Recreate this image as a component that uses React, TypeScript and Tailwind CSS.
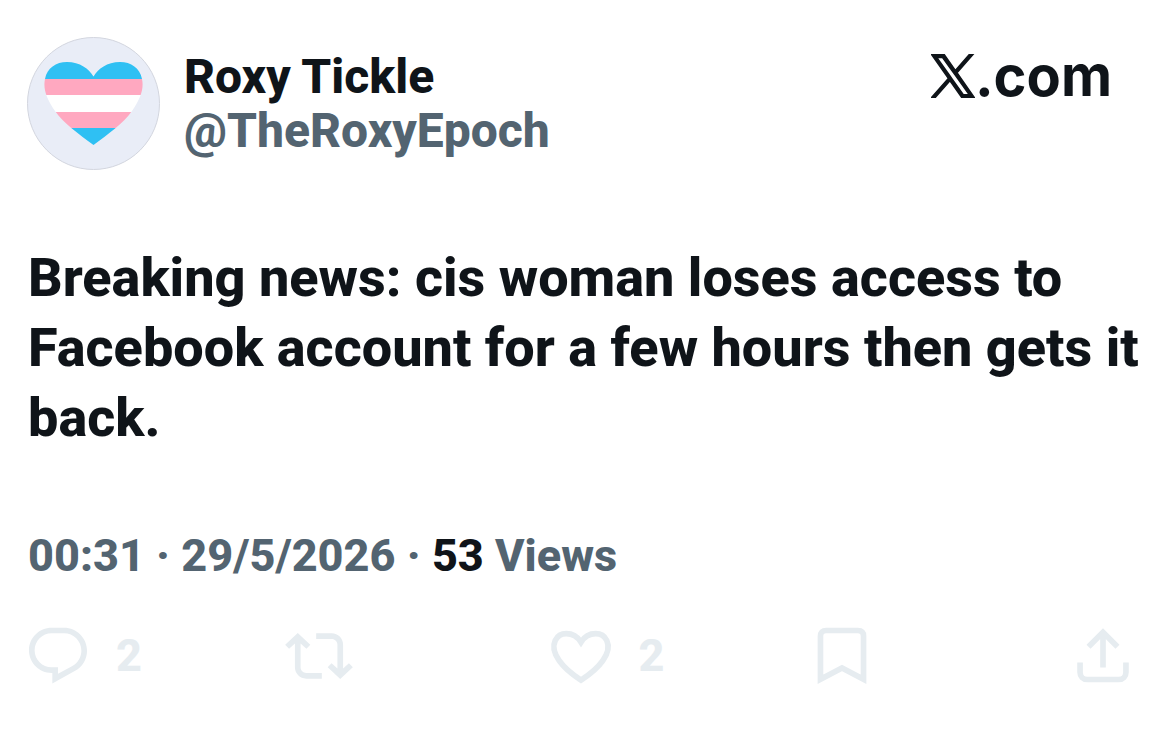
const post = {
  name: "Roxy Tickle",
  handle: "@TheRoxyEpoch",
  text: "Breaking news: cis woman loses access to Facebook account for a few hours then gets it back.",
  time: "00:31",
  date: "29/5/2026",
  views: 53,
  replies: 2,
  likes: 2,
};

const iconClass = "size-[68px] shrink-0";

function Avatar() {
  return (
    <svg viewBox="0 0 133 133" className="size-[133px] shrink-0" role="img" aria-label={post.name}>
      <defs>
        <clipPath id="heart">
          <path d="M66.500 108C52 97 37 87 28 74C19 61 16 51 18 42C20 31 29 25 40 25C53 25 62 32 66.500 39.500C71 32 80 25 93 25C104 25 113 31 115 42C117 51 114 61 105 74C96 87 81 97 66.500 108Z" />
        </clipPath>
      </defs>
      <circle cx="66.500" cy="66.500" r="66" fill="#e9edf7" stroke="#d3d6df" />
      <g clipPath="url(#heart)">
        <rect x="10" y="20" width="113" height="22" fill="#2fc0f3" />
        <rect x="10" y="42" width="113" height="16" fill="#ffa8c0" />
        <rect x="10" y="58" width="113" height="17" fill="#fff" />
        <rect x="10" y="75" width="113" height="16" fill="#ffa8c0" />
        <rect x="10" y="91" width="113" height="20" fill="#2fc0f3" />
      </g>
    </svg>
  );
}

function XLogo() {
  return (
    <svg viewBox="-0.4 -0.4 24.8 24.8" className="size-11" fill="currentColor" stroke="currentColor" strokeWidth="0.8" aria-hidden="true">
      <path d="M14.258 10.152L23.176 0h-2.113l-7.747 8.813L7.133 0H0l9.352 13.328L0 23.973h2.113l8.176-9.309 6.531 9.309h7.133zm-2.895 3.293l-.949-1.328L2.875 1.56h3.246l6.086 8.523.945 1.328 7.91 11.078h-3.246zm0 0" />
    </svg>
  );
}

function ReplyIcon() {
  return (
    <svg viewBox="0 0 24 24" className={iconClass} fill="currentColor" aria-hidden="true">
      <path d="M1.751 10c0-4.42 3.584-8 8.005-8h4.366c4.49 0 8.129 3.640 8.129 8.130 0 2.960-1.607 5.680-4.196 7.110l-8.054 4.460v-3.690h-.067c-4.490.1-8.183-3.510-8.183-8.010zm8.005-6c-3.317 0-6.005 2.690-6.005 6 0 3.370 2.770 6.080 6.138 6.010l.351-.01h1.761v2.300l5.087-2.810c1.951-1.080 3.163-3.130 3.163-5.360 0-3.390-2.744-6.130-6.129-6.130H9.756z" />
    </svg>
  );
}

function RepostIcon() {
  return (
    <svg viewBox="0 0 24 24" className={iconClass} fill="currentColor" aria-hidden="true">
      <path d="M4.500 3.880l4.432 4.140-1.364 1.460L5.500 7.550V16c0 1.100.896 2 2 2H13v2H7.500c-2.209 0-4-1.790-4-4V7.550L1.432 9.480.068 8.020 4.500 3.880zM16.500 6H11V4h5.500c2.209 0 4 1.790 4 4v8.450l2.068-1.930 1.364 1.460-4.432 4.140-4.432-4.140 1.364-1.460 2.068 1.930V8c0-1.100-.896-2-2-2z" />
    </svg>
  );
}

function LikeIcon() {
  return (
    <svg viewBox="0 0 24 24" className={iconClass} fill="none" stroke="currentColor" strokeWidth="2" aria-hidden="true">
      <path d="M12 20.500C8.500 18.200 5.900 15.900 4.300 13.600C2.400 10.900 2 8.400 2.900 6.500C3.700 4.900 5.200 4.100 6.800 4.100C9 4.100 10.800 5.200 12 7.100C13.200 5.200 15 4.100 17.200 4.100C18.800 4.100 20.300 4.900 21.100 6.500C22 8.400 21.600 10.900 19.700 13.600C18.100 15.900 15.500 18.200 12 20.500Z" />
    </svg>
  );
}

function BookmarkIcon() {
  return (
    <svg viewBox="0 0 24 24" className={iconClass} fill="none" stroke="currentColor" strokeWidth="2" aria-hidden="true">
      <path d="M4.400 20.200V5C4.400 3.700 5.100 3 6.400 3H17.600C18.900 3 19.600 3.700 19.600 5V20.200L12 16.200Z" />
    </svg>
  );
}

function ShareIcon() {
  return (
    <svg viewBox="0 0 24 24" className={iconClass} fill="none" stroke="currentColor" strokeWidth="2" aria-hidden="true">
      <path d="M12 16.100V3.800M6.900 8.700L12 3.600L17.100 8.700" />
      <path d="M3.900 14.300V17.700C3.900 19.300 4.900 20.300 6.500 20.300H17.500C19.100 20.300 20.100 19.300 20.100 17.700V14.300" />
    </svg>
  );
}

export default function App() {
  return (
    <main className="min-h-screen bg-white font-['Roboto',sans-serif] font-extrabold text-[#0f1419]">
      <article>
        <header className="flex items-start justify-between pt-[37px] pr-[58px] pl-[27px]">
          <div className="flex gap-6">
            <Avatar />
            <div className="pt-[13px] text-[48px] leading-[54px]">
              <h1>{post.name}</h1>
              <a href="#profile" className="text-[#536471]">
                {post.handle}
              </a>
            </div>
          </div>
          <a href="#home" aria-label="X.com" className="flex items-center pt-1 font-['Inter',sans-serif] text-[56px] leading-[70px] font-bold">
            <XLogo />
            <span>.com</span>
          </a>
        </header>

        <p className="pr-6 pl-7 pt-[73px] text-[54px] leading-[70px]">{post.text}</p>

        <div className="pr-6 pl-7 pt-[76px] text-[45px] leading-[54px] text-[#536471]">
          <time>
            {post.time} · {post.date}
          </time>{" "}
          · <span className="text-[#0f1419]">{post.views}</span> Views
        </div>

        <footer className="grid grid-cols-[1fr_1fr_1fr_1fr_auto] pt-[39px] pr-[33px] pl-6 text-[45px] leading-[68px] text-[#e6ecf0]">
          <button aria-label="Reply" className="flex items-center gap-6">
            <ReplyIcon />
            <span>{post.replies}</span>
          </button>
          <button aria-label="Repost" className="flex items-center">
            <RepostIcon />
          </button>
          <button aria-label="Like" className="flex items-center gap-6">
            <LikeIcon />
            <span>{post.likes}</span>
          </button>
          <button aria-label="Bookmark" className="flex items-center">
            <BookmarkIcon />
          </button>
          <button aria-label="Share" className="flex items-center">
            <ShareIcon />
          </button>
        </footer>
      </article>
    </main>
  );
}
